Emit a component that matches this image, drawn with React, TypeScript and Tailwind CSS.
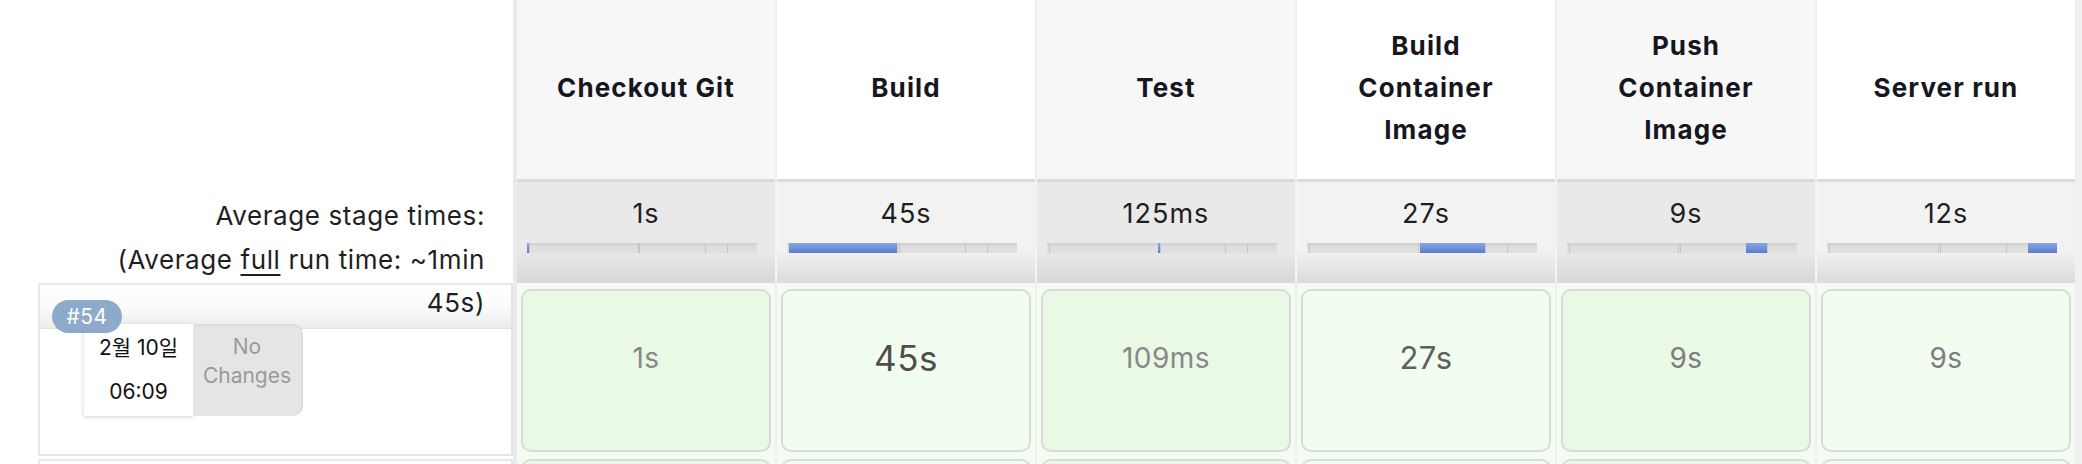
const STAGES = [
  { name: ['Checkout Git'], avg: '1s', avgSec: 1, run: '1s', size: 'text-[28px] text-[#888888]' },
  { name: ['Build'], avg: '45s', avgSec: 45, run: '45s', size: 'text-[35px] text-[#4e4e4e]' },
  { name: ['Test'], avg: '125ms', avgSec: 0.125, run: '109ms', size: 'text-[28px] text-[#888888]' },
  { name: ['Build', 'Container', 'Image'], avg: '27s', avgSec: 27, run: '27s', size: 'text-[31px] text-[#5f5f5f]' },
  { name: ['Push', 'Container', 'Image'], avg: '9s', avgSec: 9, run: '9s', size: 'text-[28px] text-[#7d7d7d]' },
  { name: ['Server run'], avg: '12s', avgSec: 12, run: '9s', size: 'text-[28px] text-[#7d7d7d]' },
]

const HEAD_BG = ['bg-[#f7f7f7]', 'bg-white']
const AVG_BG = [
  'bg-[linear-gradient(to_bottom,#e9e9e9_0%,#e9e9e9_68%,#d8d8d8_100%)]',
  'bg-[linear-gradient(to_bottom,#f2f2f2_0%,#f2f2f2_68%,#dadada_100%)]',
]
const CELL_BG = ['bg-[#eaf8e6]', 'bg-[#f1fdee]']

function StageBar({ active }: { active: number }) {
  return (
    <div className="mx-[10px] mr-[18px] mt-[11px] flex h-[10px] bg-[#dedede]">
      {STAGES.map((s, i) => (
        <div
          key={i}
          className={
            i === active
              ? 'h-full bg-[linear-gradient(to_bottom,#86a3e2_0%,#6d8fd9_60%,#5a7bcc_100%)]'
              : `h-full bg-[linear-gradient(to_bottom,#cfcfcf_0%,#dedede_40%,#e0e0e0_100%)] ${i > 0 ? 'border-l border-[#c6c6c6]' : ''}`
          }
          style={{ flexGrow: s.avgSec, flexBasis: 0, minWidth: i === active ? 2 : 0 }}
        />
      ))}
    </div>
  )
}

export default function App() {
  return (
    <div className="h-[464px] w-[2082px] overflow-hidden bg-white font-['Inter','Noto_Sans_CJK_KR',sans-serif] text-[#1f1f1f]">
      {/* header */}
      <div className="flex h-[179px]">
        <div className="w-[513px] bg-white" />
        <div className="w-[4px] bg-[#e9e9ef]" />
        <div className="flex gap-[2px] bg-[#efefef]">
          {STAGES.map((s, i) => (
            <div
              key={i}
              className={`flex w-[258px] flex-col items-center justify-center pb-[3px] text-center text-[26px] font-bold leading-[42px] tracking-[1.1px] text-[#16161e] ${HEAD_BG[i % 2]}`}
            >
              {s.name.map((line) => (
                <div key={line}>{line}</div>
              ))}
            </div>
          ))}
        </div>
        <div className="flex-1 bg-[#f0f0f0]" />
      </div>

      {/* average row */}
      <div className="flex h-[104px]">
        <div className="relative z-10 w-[513px] pr-[28px] pt-[15px] text-right text-[26px] leading-[43.5px] tracking-[0.6px]">
          <div>Average stage times:</div>
          <div>
            (Average <span className="underline underline-offset-[5px]">full</span> run time: ~1min
          </div>
          <div>45s)</div>
        </div>
        <div className="w-[4px] bg-[#e9e9ef]" />
        <div className="flex gap-[2px] bg-[#f4f4f4]">
          {STAGES.map((s, i) => (
            <div key={i} className={`w-[258px] border-t-[3px] border-[#dcdcdc] ${AVG_BG[i % 2]}`}>
              <div className="mt-[14px] h-[36px] text-center text-[27px] leading-[36px] tracking-[1px]">{s.avg}</div>
              <StageBar active={i} />
            </div>
          ))}
        </div>
        <div className="flex-1 bg-[#f0f0f0]" />
      </div>

      {/* build #54 */}
      <div className="flex h-[176px]">
        <div className="w-[513px] pl-[38px]">
          <div className="relative h-[173px] border-2 border-[#e6e6e6] bg-white">
            <div className="h-[44px] border-b border-[#e2e2e2] bg-[linear-gradient(to_bottom,#ffffff_0%,#fbfbfb_50%,#ececec_100%)]" />
            <span className="absolute left-[12px] top-[15px] flex h-[33px] w-[70px] items-center justify-center rounded-full bg-[#8eaacb] text-[21px] tracking-[0.5px] text-white">
              #54
            </span>
            <div className="ml-[44px] mt-[-5px] flex h-[92px] w-[219px]">
              <div className="flex w-[109px] flex-col items-center justify-center gap-[16px] bg-white text-[21px] leading-[28px] text-[#111111] shadow-[0_1px_4px_rgba(0,0,0,0.18)]">
                <div>2월 10일</div>
                <div>06:09</div>
              </div>
              <div className="flex w-[110px] flex-col items-center rounded-r-[10px] border-r-2 border-t-2 border-[#dddddd] bg-[#e5e5e5] pt-[6px] text-[21px] leading-[29px] text-[#9a9a9a]">
                <div>No</div>
                <div>Changes</div>
              </div>
            </div>
          </div>
        </div>
        <div className="w-[4px] bg-[#e9e9ef]" />
        <div className="flex gap-[2px] bg-[#efefef]">
          {STAGES.map((s, i) => (
            <div key={i} className="w-[258px] bg-[#f4fcf1] px-[4px] pt-[6px]">
              <div className={`h-[163px] rounded-[10px] border-2 border-[#d8dcd6] ${CELL_BG[i % 2]}`}>
                <div className={`flex h-[134px] items-center justify-center tracking-[0.5px] ${s.size}`}>{s.run}</div>
              </div>
            </div>
          ))}
        </div>
        <div className="flex-1 bg-[#f0f0f0]" />
      </div>

      {/* next build (cut off) */}
      <div className="flex h-[40px]">
        <div className="w-[513px] pl-[38px]">
          <div className="h-[40px] border-2 border-[#e6e6e6] bg-white" />
        </div>
        <div className="w-[4px] bg-[#e9e9ef]" />
        <div className="flex gap-[2px] bg-[#efefef]">
          {STAGES.map((s, i) => (
            <div key={i} className="w-[258px] bg-[#f4fcf1] px-[4px]">
              <div className={`h-[40px] rounded-t-[10px] border-2 border-[#d8dcd6] ${CELL_BG[i % 2]}`} />
            </div>
          ))}
        </div>
        <div className="flex-1 bg-[#f0f0f0]" />
      </div>
    </div>
  )
}
